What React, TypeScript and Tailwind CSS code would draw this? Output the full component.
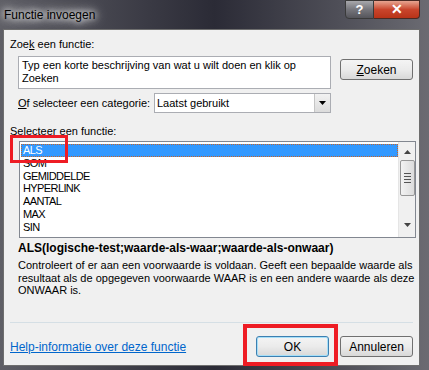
import React from 'react';

const items = ['ALS', 'SOM', 'GEMIDDELDE', 'HYPERLINK', 'AANTAL', 'MAX', 'SIN'];

function Btn({ children, focus }: { children: React.ReactNode; focus?: boolean }) {
  return (
    <div
      className={`w-[73px] h-[21px] rounded-[3px] border flex items-center justify-center text-[12px] text-black bg-gradient-to-b from-[#f4f4f4] via-[#ebebeb] to-[#d8d8d8] ${
        focus ? 'border-[#3c7fb1] shadow-[inset_0_0_0_1px_#a6dff8]' : 'border-[#707070]'
      }`}
    >
      {children}
    </div>
  );
}

export default function App() {
  return (
    <div className="w-[429px] h-[370px] flex flex-col pl-[3px] pr-[9px] pb-[4px] bg-gradient-to-r from-[#5f5f66] via-[#2b2b36] to-[#6b6b72] font-['Liberation_Sans',sans-serif] overflow-hidden">
      {/* title bar */}
      <div className="h-[29px] shrink-0 flex items-start relative">
        <span className="mt-[6px] ml-[1px] text-[12px] text-black [text-shadow:0_0_6px_#fff,0_0_10px_#fff,0_0_14px_#ddd]">
          Functie invoegen
        </span>
        <div className="absolute right-[-9px] top-0 flex mr-[9px]">
          <div className="w-[29px] h-[19px] rounded-bl-[4px] border border-[#3a3a3a] bg-gradient-to-b from-[#a8a8ac] via-[#76767c] to-[#55555b] flex items-center justify-center text-white text-[13px] font-bold">
            ?
          </div>
          <div className="w-[46px] h-[19px] rounded-br-[4px] border border-l-0 border-[#4a2a24] bg-gradient-to-b from-[#e6a491] via-[#c9452c] to-[#b83318] flex items-center justify-center text-white text-[14px] font-bold">
            ✕
          </div>
        </div>
      </div>

      {/* body */}
      <div className="flex-1 flex flex-col bg-[#f0f0f0] border border-[#6e6e6e] relative text-black">
        <div className="ml-[6px] mt-[7px] text-[11px] leading-[14px]">
          Zoe<span className="underline">k</span> een functie:
        </div>
        <div className="flex mt-[5px]">
          <div className="ml-[14px] w-[313px] h-[33px] bg-white border border-[#abadb3] px-[3px] pt-[2px] text-[11px] leading-[13px]">
            Typ een korte beschrijving van wat u wilt doen en klik op
            <br />
            Zoeken
          </div>
          <div className="ml-[9px] mt-[3px]">
            <Btn>
              <span className="underline">Z</span>oeken
            </Btn>
          </div>
        </div>
        <div className="flex items-center mt-[4px]">
          <div className="ml-[14px] w-[136px] text-[11px] whitespace-nowrap">
            <span className="underline">O</span>f selecteer een categorie:
          </div>
          <div className="w-[177px] h-[20px] bg-white border border-[#abadb3] flex items-center justify-between text-[11px]">
            <span className="ml-[2px]">Laatst gebruikt</span>
            <div className="w-[16px] h-[18px] border-l border-[#c5c5c5] bg-gradient-to-b from-[#f2f2f2] to-[#dcdcdc] flex items-center justify-center">
              <svg width="7" height="4" viewBox="0 0 7 4"><path d="M0 0h7L3.5 4z" fill="#000" /></svg>
            </div>
          </div>
        </div>
        <div className="ml-[6px] mt-[11px] text-[11px] leading-[14px]">
          <span className="underline">S</span>electeer een functie:
        </div>
        <div className="ml-[15px] mt-[3px] w-[397px] h-[97px] bg-white border border-[#828790] flex text-[11px] tracking-[-0.6px]">
          <div className="flex-1 pt-[2px] pl-[1px]">
            {items.map((it, i) => (
              <div
                key={it}
                className={`h-[12.8px] leading-[12.8px] pl-[2px] ${
                  i === 0 ? 'bg-[#3399ff] text-white outline outline-1 outline-dotted outline-[#c86428] -outline-offset-1' : ''
                }`}
              >
                {it}
              </div>
            ))}
          </div>
          <div className="w-[17px] bg-[#f0f0f0] border-l border-[#e5e5e5] flex flex-col items-center">
            <svg className="mt-[8px]" width="7" height="4" viewBox="0 0 7 4"><path d="M3.5 0L7 4H0z" fill="#444" /></svg>
            <div className="mt-[6px] w-[15px] h-[36px] rounded-[2px] border border-[#979797] bg-gradient-to-r from-[#f3f3f3] to-[#dcdcdc] flex flex-col items-center justify-center gap-[2px]">
              <div className="w-[7px] h-[1px] bg-[#555]" />
              <div className="w-[7px] h-[1px] bg-[#555]" />
              <div className="w-[7px] h-[1px] bg-[#555]" />
              <div className="w-[7px] h-[1px] bg-[#555]" />
            </div>
            <svg className="mt-[27px]" width="7" height="4" viewBox="0 0 7 4"><path d="M0 0h7L3.5 4z" fill="#444" /></svg>
          </div>
        </div>
        <div className="ml-[14px] mt-[3px] text-[12px] font-bold leading-[14px]">
          ALS(logische-test;waarde-als-waar;waarde-als-onwaar)
        </div>
        <div className="ml-[14px] mr-[4px] mt-[4px] text-[11px] leading-[12.5px]">
          Controleert of er aan een voorwaarde is voldaan. Geeft een bepaalde waarde als resultaat als de
          opgegeven voorwaarde WAAR is en een andere waarde als deze ONWAAR is.
        </div>
        <div className="flex-1" />
        <div className="mx-[6px] h-px bg-[#d5dfe5]" />
        <div className="flex items-center mt-[13px] mb-[8px]">
          <a className="ml-[6px] text-[12px] text-[#0066cc] underline">Help-informatie over deze functie</a>
          <div className="flex-1" />
          <Btn focus>OK</Btn>
          <div className="ml-[11px] mr-[6px]">
            <Btn>Annuleren</Btn>
          </div>
        </div>

        {/* red highlight boxes */}
        <div className="absolute left-[6px] top-[105px] w-[58px] h-[28px] border-[3px] border-[#ee1c24]" />
        <div className="absolute left-[239px] top-[294px] w-[95px] h-[42px] border-[4px] border-[#ee1c24]" />
      </div>
    </div>
  );
}
